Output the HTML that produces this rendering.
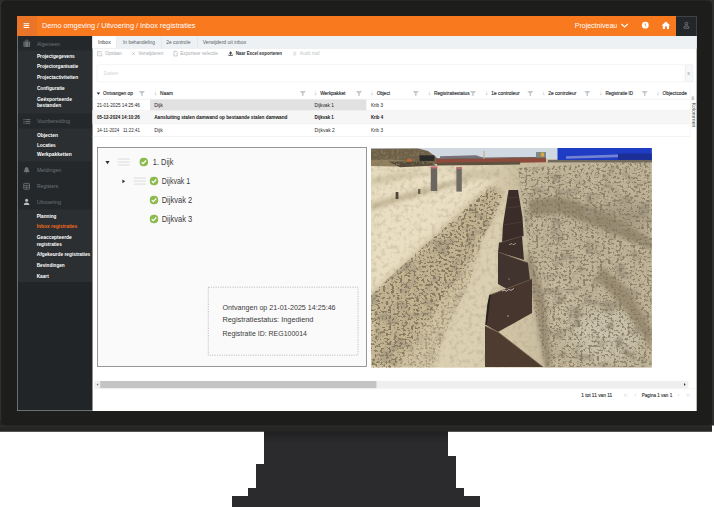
<!DOCTYPE html><html><head><meta charset="utf-8"><title>Inbox registraties</title><style>html,body{margin:0;padding:0;background:#fff;overflow:hidden}svg{display:block}text{font-family:"Liberation Sans", sans-serif;white-space:pre}</style></head><body>
<svg width="714" height="507" viewBox="0 0 714 507" font-family='"Liberation Sans", sans-serif' xml:space="preserve">
<defs>
<clipPath id="pclip"><rect x="371" y="148" width="280.8" height="219.6"/></clipPath>
<linearGradient id="sandg" x1="0" x2="1" y1="0" y2="0"><stop offset="0" stop-color="#e3d8bb"/><stop offset="0.5" stop-color="#d0c4a5"/><stop offset="1" stop-color="#bdb29a"/></linearGradient>
<linearGradient id="standsh" x1="0" x2="0" y1="0" y2="1"><stop offset="0" stop-color="#1f1f20"/><stop offset="1" stop-color="#2b2b2e"/></linearGradient>
<filter id="blur6" x="-20%" y="-20%" width="140%" height="140%"><feGaussianBlur stdDeviation="7"/></filter>
<filter id="blur3" x="-20%" y="-20%" width="140%" height="140%"><feGaussianBlur stdDeviation="3.2"/></filter>
<filter id="blur2" x="-20%" y="-20%" width="140%" height="140%"><feGaussianBlur stdDeviation="2.2"/></filter>
<filter id="tex" x="0" y="0" width="100%" height="100%">
<feTurbulence type="fractalNoise" baseFrequency="0.22" numOctaves="3" seed="7" result="n"/>
<feColorMatrix in="n" type="matrix" values="0 0 0 0 0.36  0 0 0 0 0.30  0 0 0 0 0.20  0 0 0 -3.4 1.8"/>
</filter>
<filter id="tex3" x="0" y="0" width="100%" height="100%">
<feTurbulence type="fractalNoise" baseFrequency="0.06 0.08" numOctaves="5" seed="5" result="n"/>
<feColorMatrix in="n" type="matrix" values="0 0 0 0 0.34  0 0 0 0 0.29  0 0 0 0 0.21  0 0 0 -3.6 1.72"/>
<feComposite in2="SourceGraphic" operator="in"/>
</filter>
<filter id="tex2" x="0" y="0" width="100%" height="100%">
<feTurbulence type="fractalNoise" baseFrequency="0.36 0.44" numOctaves="3" seed="23" result="n"/>
<feColorMatrix in="n" type="matrix" values="0 0 0 0 0.22  0 0 0 0 0.18  0 0 0 0 0.11  0 0 0 -8 3.72"/>
<feComposite in2="SourceGraphic" operator="in"/>
</filter>
</defs>
<rect x="0" y="0" width="714" height="432" fill="#2f2f2f"/>
<rect x="0" y="431.6" width="714" height="80" fill="#ffffff"/>
<path d="M264 431 H448 V456 H456 V488 H464 V496 H480 V507 H232 V496 H248 V488 H256 V464 H264 Z" fill="#2b2b2e"/>
<rect x="264" y="431" width="184" height="12" fill="url(#standsh)"/>
<path d="M0 420 H712 V431.6 H0 Z" fill="#262625"/>
<rect x="0" y="425.2" width="712" height="1.4" fill="#30302f"/>
<rect x="1.2" y="0.6" width="710.8" height="425" rx="4.5" ry="4.5" fill="#1d1d1b"/>
<rect x="712" y="425.5" width="2" height="7" fill="#ffffff"/>
<rect x="17" y="16" width="680" height="20" fill="#f9791f"/>
<rect x="17" y="16" width="20" height="20" fill="#ea7528"/>
<rect x="23.6" y="23.2" width="5.6" height="1.0" fill="#ffffff"/>
<rect x="23.6" y="25.1" width="5.6" height="1.0" fill="#ffffff"/>
<rect x="23.6" y="27.0" width="5.6" height="1.0" fill="#ffffff"/>
<text x="42.00" y="27.68" font-size="7.2" fill="#ffffff" textLength="153.50" lengthAdjust="spacingAndGlyphs" text-anchor="start">Demo omgeving / Uitvoering / Inbox registraties</text>
<text x="574.70" y="27.61" font-size="7.0" fill="#ffffff" textLength="42.60" lengthAdjust="spacingAndGlyphs" text-anchor="start">Projectniveau</text>
<path d="M621.4 24 L624.6 26.9 L627.8 24" stroke="#fff" stroke-width="1.15" fill="none"/>
<circle cx="645.3" cy="25.2" r="3.4" fill="#fff"/><path d="M645.3 23.3 V25.4 L646.4 26.6" stroke="#f9791f" stroke-width="0.8" fill="none"/>
<path d="M661.6 25.6 L665.9 21.6 L670.2 25.6 H669 V29 H666.9 V26.6 H664.9 V29 H662.8 V25.6 Z" fill="#fff"/>
<rect x="676" y="16" width="21" height="20" fill="#23272a"/>
<rect x="676" y="16" width="21" height="0.7" fill="#4d5154"/>
<rect x="696.3" y="16" width="0.7" height="20" fill="#4d5154"/>
<circle cx="686.4" cy="23.7" r="1.35" fill="none" stroke="#9a9ea1" stroke-width="0.6"/>
<path d="M683.9 28.2 V27.3 Q683.9 26 686.4 26 Q688.9 26 688.9 27.3 V28.2 Z" fill="none" stroke="#9a9ea1" stroke-width="0.6"/>
<rect x="17" y="36" width="75.5" height="375" fill="#2b2f32"/>
<rect x="17" y="36" width="75.5" height="14.299999999999997" fill="#24282b"/>
<rect x="17" y="113.5" width="75.5" height="15.0" fill="#24282b"/>
<rect x="17" y="161.3" width="75.5" height="48.19999999999999" fill="#24282b"/>
<rect x="17" y="282" width="75.5" height="129" fill="#222528"/>
<rect x="17" y="36" width="0.8" height="375" fill="#7d8184"/>
<rect x="17" y="410.0" width="75.5" height="0.7" fill="#8e9193"/>
<rect x="23.5" y="41.5" width="6.6" height="5.6" rx="0.8" fill="#6f7478"/><path d="M25.6 41.5 v-1.3 h2.4 v1.3" stroke="#6f7478" fill="none" stroke-width="0.7"/><path d="M24.9 41.5 v5.6 M28.7 41.5 v5.6" stroke="#24282b" stroke-width="0.5"/>
<text x="36.90" y="45.85" font-size="5.6" fill="#6f7478" textLength="23.00" lengthAdjust="spacingAndGlyphs" text-anchor="start">Algemeen</text>
<text x="36.90" y="58.15" font-size="5.3" fill="#ffffff" font-weight="bold" textLength="37.80" lengthAdjust="spacingAndGlyphs" text-anchor="start">Projectgegevens</text>
<text x="36.90" y="68.35" font-size="5.3" fill="#ffffff" font-weight="bold" textLength="41.20" lengthAdjust="spacingAndGlyphs" text-anchor="start">Projectorganisatie</text>
<text x="36.90" y="79.15" font-size="5.3" fill="#ffffff" font-weight="bold" textLength="41.20" lengthAdjust="spacingAndGlyphs" text-anchor="start">Projectactiviteiten</text>
<text x="36.90" y="90.05" font-size="5.3" fill="#ffffff" font-weight="bold" textLength="27.80" lengthAdjust="spacingAndGlyphs" text-anchor="start">Configuratie</text>
<text x="36.90" y="100.65" font-size="5.3" fill="#ffffff" font-weight="bold" textLength="35.00" lengthAdjust="spacingAndGlyphs" text-anchor="start">Geëxporteerde</text>
<text x="36.90" y="106.85" font-size="5.3" fill="#ffffff" font-weight="bold" textLength="24.20" lengthAdjust="spacingAndGlyphs" text-anchor="start">bestanden</text>
<rect x="23.4" y="119.2" width="1.2" height="0.9" fill="#6f7478"/>
<rect x="25.4" y="119.2" width="4.9" height="0.9" fill="#6f7478"/>
<rect x="23.4" y="121.0" width="1.2" height="0.9" fill="#6f7478"/>
<rect x="25.4" y="121.0" width="4.9" height="0.9" fill="#6f7478"/>
<rect x="23.4" y="122.8" width="1.2" height="0.9" fill="#6f7478"/>
<rect x="25.4" y="122.8" width="4.9" height="0.9" fill="#6f7478"/>
<text x="36.90" y="123.15" font-size="5.6" fill="#6f7478" textLength="33.10" lengthAdjust="spacingAndGlyphs" text-anchor="start">Voorbereiding</text>
<text x="36.90" y="136.65" font-size="5.3" fill="#ffffff" font-weight="bold" textLength="21.00" lengthAdjust="spacingAndGlyphs" text-anchor="start">Objecten</text>
<text x="36.90" y="147.05" font-size="5.3" fill="#ffffff" font-weight="bold" textLength="18.80" lengthAdjust="spacingAndGlyphs" text-anchor="start">Locaties</text>
<text x="36.90" y="156.15" font-size="5.3" fill="#ffffff" font-weight="bold" textLength="34.90" lengthAdjust="spacingAndGlyphs" text-anchor="start">Werkpakketten</text>
<path d="M26.6 167 q-2 0.2 -2 2.6 q0 1.4 -0.9 2 v0.5 h5.8 v-0.5 q-0.9 -0.6 -0.9 -2 q0 -2.4 -2 -2.6 z M25.9 172.6 h1.4 q0 0.8 -0.7 0.8 q-0.7 0 -0.7 -0.8z" fill="#6f7478"/>
<text x="36.90" y="171.85" font-size="5.6" fill="#6f7478" textLength="24.40" lengthAdjust="spacingAndGlyphs" text-anchor="start">Meldingen</text>
<rect x="23.7" y="183.4" width="5.8" height="5.8" rx="0.6" fill="none" stroke="#6f7478" stroke-width="0.8"/><path d="M23.7 185.4 h5.8 M26.6 185.4 v3.8 M23.7 187.3 h5.8" stroke="#6f7478" stroke-width="0.7" fill="none"/>
<text x="36.90" y="188.15" font-size="5.6" fill="#6f7478" textLength="21.30" lengthAdjust="spacingAndGlyphs" text-anchor="start">Registers</text>
<circle cx="26.6" cy="200.2" r="1.5" fill="#b9bdc0"/><path d="M23.8 205 q0 -2.6 2.8 -2.6 q2.8 0 2.8 2.6 z" fill="#b9bdc0"/>
<text x="36.70" y="203.85" font-size="5.6" fill="#6f7478" textLength="24.40" lengthAdjust="spacingAndGlyphs" text-anchor="start">Uitvoering</text>
<text x="36.70" y="217.75" font-size="5.3" fill="#fff" font-weight="bold" textLength="19.70" lengthAdjust="spacingAndGlyphs" text-anchor="start">Planning</text>
<text x="36.70" y="228.15" font-size="5.3" fill="#f26a1b" font-weight="bold" textLength="40.60" lengthAdjust="spacingAndGlyphs" text-anchor="start">Inbox registraties</text>
<text x="36.70" y="238.75" font-size="5.3" fill="#fff" font-weight="bold" textLength="35.10" lengthAdjust="spacingAndGlyphs" text-anchor="start">Geaccepteerde</text>
<text x="36.70" y="245.65" font-size="5.3" fill="#fff" font-weight="bold" textLength="25.10" lengthAdjust="spacingAndGlyphs" text-anchor="start">registraties</text>
<text x="36.70" y="256.05" font-size="5.3" fill="#fff" font-weight="bold" textLength="53.60" lengthAdjust="spacingAndGlyphs" text-anchor="start">Afgekeurde registraties</text>
<text x="36.70" y="266.75" font-size="5.3" fill="#fff" font-weight="bold" textLength="28.00" lengthAdjust="spacingAndGlyphs" text-anchor="start">Bevindingen</text>
<text x="36.70" y="277.65" font-size="5.3" fill="#fff" font-weight="bold" textLength="12.10" lengthAdjust="spacingAndGlyphs" text-anchor="start">Kaart</text>
<rect x="92.5" y="36" width="604.2" height="375" fill="#ffffff"/>
<rect x="92.5" y="36" width="604.2" height="12.2" fill="#eef1f4"/>
<rect x="92.5" y="36.4" width="24" height="11.8" fill="#ffffff"/>
<rect x="92.5" y="48" width="604.2" height="0.5" fill="#e2e4e6"/>
<rect x="116.4" y="36.4" width="0.5" height="11.6" fill="#dcdfe2"/>
<rect x="161" y="36.4" width="0.5" height="11.6" fill="#dcdfe2"/>
<rect x="197" y="36.4" width="0.5" height="11.6" fill="#dcdfe2"/>
<text x="98.00" y="43.62" font-size="5.2" fill="#33373a" textLength="12.80" lengthAdjust="spacingAndGlyphs" text-anchor="start">Inbox</text>
<text x="123.00" y="43.62" font-size="5.2" fill="#5c6165" textLength="32.00" lengthAdjust="spacingAndGlyphs" text-anchor="start">In behandeling</text>
<text x="166.20" y="43.62" font-size="5.2" fill="#5c6165" textLength="24.20" lengthAdjust="spacingAndGlyphs" text-anchor="start">2e controle</text>
<text x="202.70" y="43.62" font-size="5.2" fill="#5c6165" textLength="43.50" lengthAdjust="spacingAndGlyphs" text-anchor="start">Verwijderd uit inbox</text>
<path d="M97.6 51.6 h2.6 M97.6 51.6 v4.2 h4.2 v-2.4 M99.4 54 l3 -3.2" stroke="#a9adb1" stroke-width="0.6" fill="none"/>
<text x="105.10" y="55.12" font-size="4.6" fill="#a9adb1" textLength="16.80" lengthAdjust="spacingAndGlyphs" text-anchor="start">Opslaan</text>
<path d="M132.3 52.4 l2.4 2.4 M134.7 52.4 l-2.4 2.4" stroke="#a9adb1" stroke-width="0.6"/>
<text x="138.20" y="55.12" font-size="4.6" fill="#a9adb1" textLength="25.20" lengthAdjust="spacingAndGlyphs" text-anchor="start">Verwijderen</text>
<path d="M174 51.2 h2.2 l1 1 v3.8 h-3.2 z" stroke="#a9adb1" stroke-width="0.6" fill="none"/>
<text x="180.20" y="55.12" font-size="4.6" fill="#a9adb1" textLength="37.80" lengthAdjust="spacingAndGlyphs" text-anchor="start">Exporteer selectie</text>
<path d="M228.6 55.9 h4 v-1.4 h-0.6 v0.8 h-2.8 v-0.8 h-0.6 z M230.6 51.2 l1.8 2.2 h-1.2 v1.4 h-1.2 v-1.4 h-1.2 z" fill="#3a3e41"/>
<text x="235.70" y="55.12" font-size="4.6" fill="#2e3235" font-weight="bold" textLength="46.30" lengthAdjust="spacingAndGlyphs" text-anchor="start">Naar Excel exporteren</text>
<path d="M293.2 52.2 h3 M293.2 53.6 h3 M293.2 55 h3" stroke="#c2c6c9" stroke-width="0.6"/>
<text x="299.80" y="55.12" font-size="4.6" fill="#c2c6c9" textLength="19.80" lengthAdjust="spacingAndGlyphs" text-anchor="start">Audit trail</text>
<rect x="97" y="64.6" width="588.4" height="17.2" rx="2" fill="#ffffff" stroke="#f0f1f3" stroke-width="0.8"/>
<rect x="685.4" y="64.6" width="7.4" height="17.2" rx="1" fill="#f6f7f8" stroke="#e6e8ea" stroke-width="0.6"/>
<text x="687.20" y="74.82" font-size="4.6" fill="#8a8e92" textLength="2.60" lengthAdjust="spacingAndGlyphs" text-anchor="start">x</text>
<text x="103.40" y="75.02" font-size="5.2" fill="#d2d5d9" textLength="15.00" lengthAdjust="spacingAndGlyphs" text-anchor="start">Zoeken</text>
<path d="M96.6 92.5 h3.6 l-1.8 2.2 z" fill="#2e3235"/>
<text x="103.10" y="94.98" font-size="4.8" fill="#2e3235" textLength="29.70" lengthAdjust="spacingAndGlyphs" text-anchor="start" stroke="#2e3235" stroke-width="0.14">Ontvangen op</text>
<path d="M138.80 90.90 H145.00 L142.60 93.70 V96.10 H141.20 V93.70 Z" fill="#c6c9cc"/>
<text x="160.10" y="94.98" font-size="4.8" fill="#2e3235" textLength="12.80" lengthAdjust="spacingAndGlyphs" text-anchor="start" stroke="#2e3235" stroke-width="0.14">Naam</text>
<path d="M155.5 91.60000000000001 V95.0 M154.5 94.0 L155.5 95.10000000000001 L156.5 94.0" stroke="#c9cdd0" stroke-width="0.6" fill="none"/>
<path d="M299.70 90.90 H305.90 L303.50 93.70 V96.10 H302.10 V93.70 Z" fill="#c6c9cc"/>
<text x="320.20" y="94.98" font-size="4.8" fill="#2e3235" textLength="25.20" lengthAdjust="spacingAndGlyphs" text-anchor="start" stroke="#2e3235" stroke-width="0.14">Werkpakket</text>
<path d="M315.59999999999997 91.60000000000001 V95.0 M314.59999999999997 94.0 L315.59999999999997 95.10000000000001 L316.59999999999997 94.0" stroke="#c9cdd0" stroke-width="0.6" fill="none"/>
<path d="M355.90 90.90 H362.10 L359.70 93.70 V96.10 H358.30 V93.70 Z" fill="#c6c9cc"/>
<text x="376.70" y="94.98" font-size="4.8" fill="#2e3235" textLength="13.30" lengthAdjust="spacingAndGlyphs" text-anchor="start" stroke="#2e3235" stroke-width="0.14">Object</text>
<path d="M372.09999999999997 91.60000000000001 V95.0 M371.09999999999997 94.0 L372.09999999999997 95.10000000000001 L373.09999999999997 94.0" stroke="#c9cdd0" stroke-width="0.6" fill="none"/>
<path d="M412.70 90.90 H418.90 L416.50 93.70 V96.10 H415.10 V93.70 Z" fill="#c6c9cc"/>
<text x="434.00" y="94.98" font-size="4.8" fill="#2e3235" textLength="35.60" lengthAdjust="spacingAndGlyphs" text-anchor="start" stroke="#2e3235" stroke-width="0.14">Registratiestatus</text>
<path d="M429.4 91.60000000000001 V95.0 M428.4 94.0 L429.4 95.10000000000001 L430.4 94.0" stroke="#c9cdd0" stroke-width="0.6" fill="none"/>
<path d="M469.90 90.90 H476.10 L473.70 93.70 V96.10 H472.30 V93.70 Z" fill="#c6c9cc"/>
<text x="491.30" y="94.98" font-size="4.8" fill="#2e3235" textLength="28.30" lengthAdjust="spacingAndGlyphs" text-anchor="start" stroke="#2e3235" stroke-width="0.14">1e controleur</text>
<path d="M486.7 91.60000000000001 V95.0 M485.7 94.0 L486.7 95.10000000000001 L487.7 94.0" stroke="#c9cdd0" stroke-width="0.6" fill="none"/>
<path d="M527.20 90.90 H533.40 L531.00 93.70 V96.10 H529.60 V93.70 Z" fill="#c6c9cc"/>
<text x="548.30" y="94.98" font-size="4.8" fill="#2e3235" textLength="28.00" lengthAdjust="spacingAndGlyphs" text-anchor="start" stroke="#2e3235" stroke-width="0.14">2e controleur</text>
<path d="M543.6999999999999 91.60000000000001 V95.0 M542.6999999999999 94.0 L543.6999999999999 95.10000000000001 L544.6999999999999 94.0" stroke="#c9cdd0" stroke-width="0.6" fill="none"/>
<path d="M584.20 90.90 H590.40 L588.00 93.70 V96.10 H586.60 V93.70 Z" fill="#c6c9cc"/>
<text x="605.50" y="94.98" font-size="4.8" fill="#2e3235" textLength="27.50" lengthAdjust="spacingAndGlyphs" text-anchor="start" stroke="#2e3235" stroke-width="0.14">Registratie ID</text>
<path d="M600.9 91.60000000000001 V95.0 M599.9 94.0 L600.9 95.10000000000001 L601.9 94.0" stroke="#c9cdd0" stroke-width="0.6" fill="none"/>
<path d="M641.60 90.90 H647.80 L645.40 93.70 V96.10 H644.00 V93.70 Z" fill="#c6c9cc"/>
<text x="662.60" y="94.98" font-size="4.8" fill="#2e3235" textLength="24.20" lengthAdjust="spacingAndGlyphs" text-anchor="start" stroke="#2e3235" stroke-width="0.14">Objectcode</text>
<path d="M658.0 91.60000000000001 V95.0 M657.0 94.0 L658.0 95.10000000000001 L659.0 94.0" stroke="#c9cdd0" stroke-width="0.6" fill="none"/>
<rect x="92.5" y="98.9" width="597.3" height="0.5" fill="#e4e6e8"/>
<rect x="150" y="99.4" width="216.4" height="11.2" fill="#e1e1e1"/>
<rect x="92.5" y="110.6" width="597.3" height="13.2" fill="#f6f6f6"/>
<rect x="92.5" y="110.6" width="597.3" height="0.4" fill="#ececec"/>
<rect x="92.5" y="123.8" width="597.3" height="0.4" fill="#ececec"/>
<rect x="92.5" y="136.4" width="597.3" height="0.5" fill="#e4e6e8"/>
<text x="96.90" y="107.02" font-size="5.5" fill="#222222" textLength="43.00" lengthAdjust="spacingAndGlyphs" text-anchor="start">21-01-2025 14:25:46</text>
<text x="154.20" y="107.02" font-size="5.5" fill="#222222" textLength="8.60" lengthAdjust="spacingAndGlyphs" text-anchor="start">Dijk</text>
<text x="314.60" y="107.02" font-size="5.5" fill="#222222" textLength="19.20" lengthAdjust="spacingAndGlyphs" text-anchor="start">Dijkvak 1</text>
<text x="370.90" y="107.02" font-size="5.5" fill="#222222" textLength="12.20" lengthAdjust="spacingAndGlyphs" text-anchor="start">Krib 3</text>
<text x="96.90" y="119.41" font-size="5.5" fill="#151515" font-weight="bold" textLength="43.00" lengthAdjust="spacingAndGlyphs" text-anchor="start">05-12-2024 14:10:26</text>
<text x="154.20" y="119.41" font-size="5.5" fill="#151515" font-weight="bold" textLength="133.30" lengthAdjust="spacingAndGlyphs" text-anchor="start">Aansluiting stalen damwand op bestaande stalen damwand</text>
<text x="314.60" y="119.41" font-size="5.5" fill="#151515" font-weight="bold" textLength="19.20" lengthAdjust="spacingAndGlyphs" text-anchor="start">Dijkvak 1</text>
<text x="370.90" y="119.41" font-size="5.5" fill="#151515" font-weight="bold" textLength="12.20" lengthAdjust="spacingAndGlyphs" text-anchor="start">Krib 4</text>
<text x="96.90" y="131.81" font-size="5.5" fill="#2e2e2e" textLength="43.00" lengthAdjust="spacingAndGlyphs" text-anchor="start">14-11-2024   11:22:41</text>
<text x="154.20" y="131.81" font-size="5.5" fill="#2e2e2e" textLength="8.60" lengthAdjust="spacingAndGlyphs" text-anchor="start">Dijk</text>
<text x="314.60" y="131.81" font-size="5.5" fill="#2e2e2e" textLength="20.20" lengthAdjust="spacingAndGlyphs" text-anchor="start">Dijkvak 2</text>
<text x="370.90" y="131.81" font-size="5.5" fill="#2e2e2e" textLength="12.20" lengthAdjust="spacingAndGlyphs" text-anchor="start">Krib 3</text>
<rect x="689.8" y="86" width="0.5" height="51" fill="#eceef0"/>
<text transform="translate(691.6,102.4) rotate(90)" font-size="4.6" fill="#4a4a4a" textLength="25" lengthAdjust="spacingAndGlyphs">Kolommen</text>
<path d="M691.6 97 h2.6 M691.6 98.2 h2.6 M691.6 99.4 h2.6" stroke="#777" stroke-width="0.5"/>
<rect x="97.4" y="147.4" width="269" height="219.2" fill="#fafafa" stroke="#7c7c7c" stroke-width="0.8"/>
<path d="M105.4 161 h4.2 l-2.1 3.2 z" fill="#333"/>
<rect x="117.6" y="158.5" width="12" height="1.1" fill="#dedede"/>
<rect x="117.6" y="161.5" width="12" height="1.1" fill="#dedede"/>
<rect x="117.6" y="164.5" width="12" height="1.1" fill="#dedede"/>
<rect x="139.60000000000002" y="157.8" width="8.4" height="8.4" rx="3.9" fill="#8cba4e"/>
<path d="M141.60000000000002 162.1 L143.10000000000002 163.6 L146.10000000000002 160.5" stroke="#fff" stroke-width="1.2" fill="none"/>
<text x="152.80" y="164.84" font-size="8.6" fill="#3a3a3a" textLength="20.60" lengthAdjust="spacingAndGlyphs" text-anchor="start">1. Dijk</text>
<path d="M122.4 179.4 v3.8 l2.8 -1.9 z" fill="#333"/>
<rect x="133.8" y="177.5" width="12" height="1.1" fill="#dedede"/>
<rect x="133.8" y="180.5" width="12" height="1.1" fill="#dedede"/>
<rect x="133.8" y="183.5" width="12" height="1.1" fill="#dedede"/>
<rect x="149.8" y="176.8" width="8.4" height="8.4" rx="3.9" fill="#8cba4e"/>
<path d="M151.8 181.1 L153.3 182.6 L156.3 179.5" stroke="#fff" stroke-width="1.2" fill="none"/>
<text x="161.70" y="183.84" font-size="8.6" fill="#3a3a3a" textLength="28.50" lengthAdjust="spacingAndGlyphs" text-anchor="start">Dijkvak 1</text>
<rect x="149.8" y="195.8" width="8.4" height="8.4" rx="3.9" fill="#8cba4e"/>
<path d="M151.8 200.1 L153.3 201.6 L156.3 198.5" stroke="#fff" stroke-width="1.2" fill="none"/>
<text x="161.70" y="202.84" font-size="8.6" fill="#3a3a3a" textLength="30.50" lengthAdjust="spacingAndGlyphs" text-anchor="start">Dijkvak 2</text>
<rect x="149.8" y="214.8" width="8.4" height="8.4" rx="3.9" fill="#8cba4e"/>
<path d="M151.8 219.1 L153.3 220.6 L156.3 217.5" stroke="#fff" stroke-width="1.2" fill="none"/>
<text x="161.70" y="221.84" font-size="8.6" fill="#3a3a3a" textLength="30.50" lengthAdjust="spacingAndGlyphs" text-anchor="start">Dijkvak 3</text>
<rect x="208.3" y="287.2" width="149.7" height="68" fill="none" stroke="#a8a8a8" stroke-width="0.7" stroke-dasharray="1.2 1.2"/>
<text x="222.50" y="309.94" font-size="8" fill="#3a3a3a" textLength="113.10" lengthAdjust="spacingAndGlyphs" text-anchor="start">Ontvangen op 21-01-2025 14:25:46</text>
<text x="222.50" y="322.34" font-size="8" fill="#3a3a3a" textLength="90.90" lengthAdjust="spacingAndGlyphs" text-anchor="start">Registratiestatus: Ingediend</text>
<text x="222.50" y="335.64" font-size="8" fill="#3a3a3a" textLength="84.40" lengthAdjust="spacingAndGlyphs" text-anchor="start">Registratie ID: REG100014</text>
<g clip-path="url(#pclip)">
<rect x="371" y="148" width="281" height="220" fill="url(#sandg)"/>
<g filter="url(#blur6)">
<path d="M371 165 L500 165 L494 184.6 L473.6 201 L428.4 242 L383.3 283 L371 295.4 Z" fill="#eadfc3"/>
<path d="M518 168 L652 160 L652 367 L545 367 L533 300 L526 230 Z" fill="#c0b59a"/>
<ellipse cx="625" cy="215" rx="30" ry="14" fill="#a89c85"/>
<ellipse cx="605" cy="335" rx="35" ry="25" fill="#cac3ad"/>
<ellipse cx="560" cy="300" rx="14" ry="40" fill="#c6bca2"/>
</g>
<g filter="url(#blur3)">
<path d="M494 184.6 L473.6 201 L428.4 242 L383.3 283 L371 295.4 L371 368 L432.5 368 L449 324 L469.5 283 L481.8 242 L498.2 201 L502.3 192.8 Z" fill="#d0c3a2"/>
<path d="M502.3 192.8 L508 190 L505.6 208 L503 225 L499 243 L498 284 L490 295 L486 325 L485 368 L432.5 368 L449 324 L469.5 283 L481.8 242 L498.2 201 Z" fill="#dbd0b2"/>
<path d="M494 185 L473.6 201.5 L428.4 242.5 L383.3 283.5 L371 296 L371 368 L395 368 L425 325 L462 272 L494 218 L503 196 Z" fill="#c4b592"/>
</g>
<g filter="url(#blur2)">
<path d="M371 203 L425 188 L470 176 L470 181 L425 194 L371 210 Z" fill="#c2b696"/>
<path d="M371 178 L400 172 L440 172 L400 180 L371 186 Z" fill="#d2c7a8"/>
<path d="M445 170 L500 168 L505 178 L470 180 Z" fill="#d0c5a6"/>
<path d="M528 200 L560 196 L600 210 L640 232 L652 240 L652 250 L600 228 L560 214 L530 216 Z" fill="#95896f"/>
<path d="M600 265 L630 290 L652 330 L652 350 L625 310 L598 280 Z" fill="#9a8d73"/>
<path d="M530 250 L545 300 L552 367 L545 367 L536 310 L526 260 Z" fill="#9d9076"/>
</g>
<rect x="371" y="160" width="281" height="208" filter="url(#tex)" opacity="0.28"/>
<path d="M518 168 L652 160 L652 367 L545 367 L533 300 L526 230 Z" filter="url(#tex3)" opacity="0.95"/>
<path d="M494 184.6 L473.6 201 L428.4 242 L383.3 283 L371 295.4 L371 368 L432.5 368 L449 324 L469.5 283 L481.8 242 L498.2 201 L502.3 192.8 Z" filter="url(#tex3)" opacity="0.45"/>
<path d="M494 184.6 L473.6 201 L428.4 242 L383.3 283 L371 295.4 L371 368 L432.5 368 L449 324 L469.5 283 L481.8 242 L498.2 201 L502.3 192.8 Z" filter="url(#tex2)" opacity="0.5"/>
<path d="M494 185 L473.6 201.5 L428.4 242.5 L383.3 283.5 L371 296 L371 368 L395 368 L425 325 L462 272 L494 218 L503 196 Z" filter="url(#tex3)" opacity="0.55"/>
<path d="M494 185 L473.6 201.5 L428.4 242.5 L383.3 283.5 L371 296 L371 368 L395 368 L425 325 L462 272 L494 218 L503 196 Z" filter="url(#tex2)" opacity="0.85"/>
<path d="M518 168 L652 160 L652 367 L545 367 L533 300 L526 230 Z" filter="url(#tex2)" opacity="0.8"/>
<rect x="371" y="148" width="281" height="11" fill="#d0d8e2"/>
<path d="M371 148.7 L418 148.5 L428 151 L436 157 L440 164 L371 165.5 Z" fill="#6f6147"/>
<path d="M371 160 L392 159.4 L421 162 L436 165 L392 166.6 L371 166 Z" fill="#92815f"/>
<path d="M388 161.6 L428 161.4 L436 165.6 L400 167.2 Z" fill="#574c3a"/>
<path d="M371 149.7 L414.4 149 L427.4 151.3 L436 157.8 L440 164 L371 166 Z" filter="url(#tex2)" opacity="0.8"/>
<path d="M436 158.9 L546 157.6 L546 162.3 L436 164 Z" fill="#8e4b3c"/>
<path d="M436 158.2 L546 156.9 L546 158 L436 159.3 Z" fill="#6d5a52"/>
<path d="M437 162.8 L520 161.6 L520 164.6 L437 165.6 Z" fill="#5e5140"/>
<path d="M440 156.2 L476 155.2 L484 158 L440 158.8 Z" fill="#77727a"/>
<rect x="419.5" y="155.3" width="15" height="5.6" fill="#2a2a28"/>
<rect x="407" y="159.2" width="5" height="2.2" fill="#d0662a"/>
<rect x="536" y="152" width="10" height="5.6" fill="#7d8a86"/>
<rect x="541" y="152.6" width="3" height="4" fill="#e2a73a"/>
<rect x="483.5" y="151" width="1" height="8" fill="#c9a27a"/>
<rect x="557.5" y="148" width="95" height="13.2" fill="#1f3cc4"/>
<path d="M566 156.2 L618 154.6 L618 157.2 L566 158.8 Z" fill="#7484d4"/>
<rect x="618" y="153.5" width="34" height="8" fill="#1b2f96"/>
<rect x="548" y="160" width="104" height="2.4" fill="#6f6a5c"/>
<rect x="430.8" y="167" width="6.4" height="24" fill="#6c6661"/>
<rect x="430.8" y="166.4" width="6.4" height="2" fill="#c46a74"/>
<rect x="456.4" y="167.6" width="5.4" height="24" fill="#6f6a64"/>
<rect x="456.4" y="167" width="5.4" height="2" fill="#c46a74"/>
<rect x="395.6" y="192" width="2.8" height="7" fill="#4f4639"/>
<rect x="418" y="189" width="2.4" height="5" fill="#6a5f4c"/>
<path d="M508.6 190 L518 190 L522.5 217.5 L523.6 236 L502 242 L503 225 L505.6 208 Z" fill="#3a2d29"/>
<path d="M499 243 L522 236 L524 260 L498 252 Z" fill="#3d302b"/>
<path d="M498 252 L528 263 L530 280 L507 289 L498 284 Z" fill="#41332d"/>
<path d="M490 295 L532 279 L532 313 L498 332 L486 325 L488 305 Z" fill="#46362e"/>
<path d="M485 326 L498 332 L543 367 L485 367 Z" fill="#4e3c31"/>
<path d="M485 326 L498 332 L543 367" stroke="#7a6450" stroke-width="0.9" fill="none"/>
<path d="M490 295 L532 279" stroke="#6d5848" stroke-width="0.9" fill="none"/>
<path d="M498 252 L528 263" stroke="#66534a" stroke-width="0.8" fill="none"/>
<path d="M499 243 L522 236" stroke="#5d4c45" stroke-width="0.7" fill="none"/>
<path d="M503 225 L521 222 M505.6 208 L520 206.5 M507 198 L519 197.2" stroke="#54453f" stroke-width="0.6" fill="none"/>
<path d="M486 325 L490 295 L488 305 Z M486 325 L489 300" stroke="#2a201d" stroke-width="1.6" fill="none"/>
<path d="M502 291 l3 -1 l1 1.4 l3 -2 l2 1 l3 -2" stroke="#e8e2da" stroke-width="0.7" fill="none"/>
<path d="M509 244.5 l3 -0.8 l1 1 l3 -1.4" stroke="#d8d2ca" stroke-width="0.6" fill="none"/>
<circle cx="508" cy="316" r="0.9" fill="#8a8078"/><circle cx="509" cy="279" r="0.8" fill="#8a8078"/>
</g>
<rect x="94.5" y="380.9" width="593.9" height="7.4" fill="#efefef"/>
<rect x="100.2" y="381.0" width="276.2" height="7.2" fill="#c4c4c4"/>
<path d="M98.2 383.5 l-1.5 1.1 l1.5 1.1 z" fill="#666"/>
<path d="M684 383 l1.6 1.5 l-1.6 1.5 z" fill="#333"/>
<rect x="92.5" y="388.2" width="604" height="0.4" fill="#ececec"/>
<text x="581.20" y="396.88" font-size="4.8" fill="#3a3a3a" textLength="31.00" lengthAdjust="spacingAndGlyphs" text-anchor="start" stroke="#3a3a3a" stroke-width="0.14">1 tot 11 van 11</text>
<text x="641.80" y="396.88" font-size="4.8" fill="#3a3a3a" textLength="30.40" lengthAdjust="spacingAndGlyphs" text-anchor="start" stroke="#3a3a3a" stroke-width="0.14">Pagina 1 van 1</text>
<path d="M624.6 393.8 v3 M627.4 393.8 l-1.6 1.5 l1.6 1.5" stroke="#d0d3d6" stroke-width="0.6" fill="none"/>
<path d="M636.2 393.8 l-1.6 1.5 l1.6 1.5" stroke="#d0d3d6" stroke-width="0.6" fill="none"/>
<path d="M677.6 393.8 l1.6 1.5 l-1.6 1.5" stroke="#d0d3d6" stroke-width="0.6" fill="none"/>
<path d="M686.4 393.8 l1.6 1.5 l-1.6 1.5 M689 393.8 v3" stroke="#d0d3d6" stroke-width="0.6" fill="none"/>
</svg></body></html>
